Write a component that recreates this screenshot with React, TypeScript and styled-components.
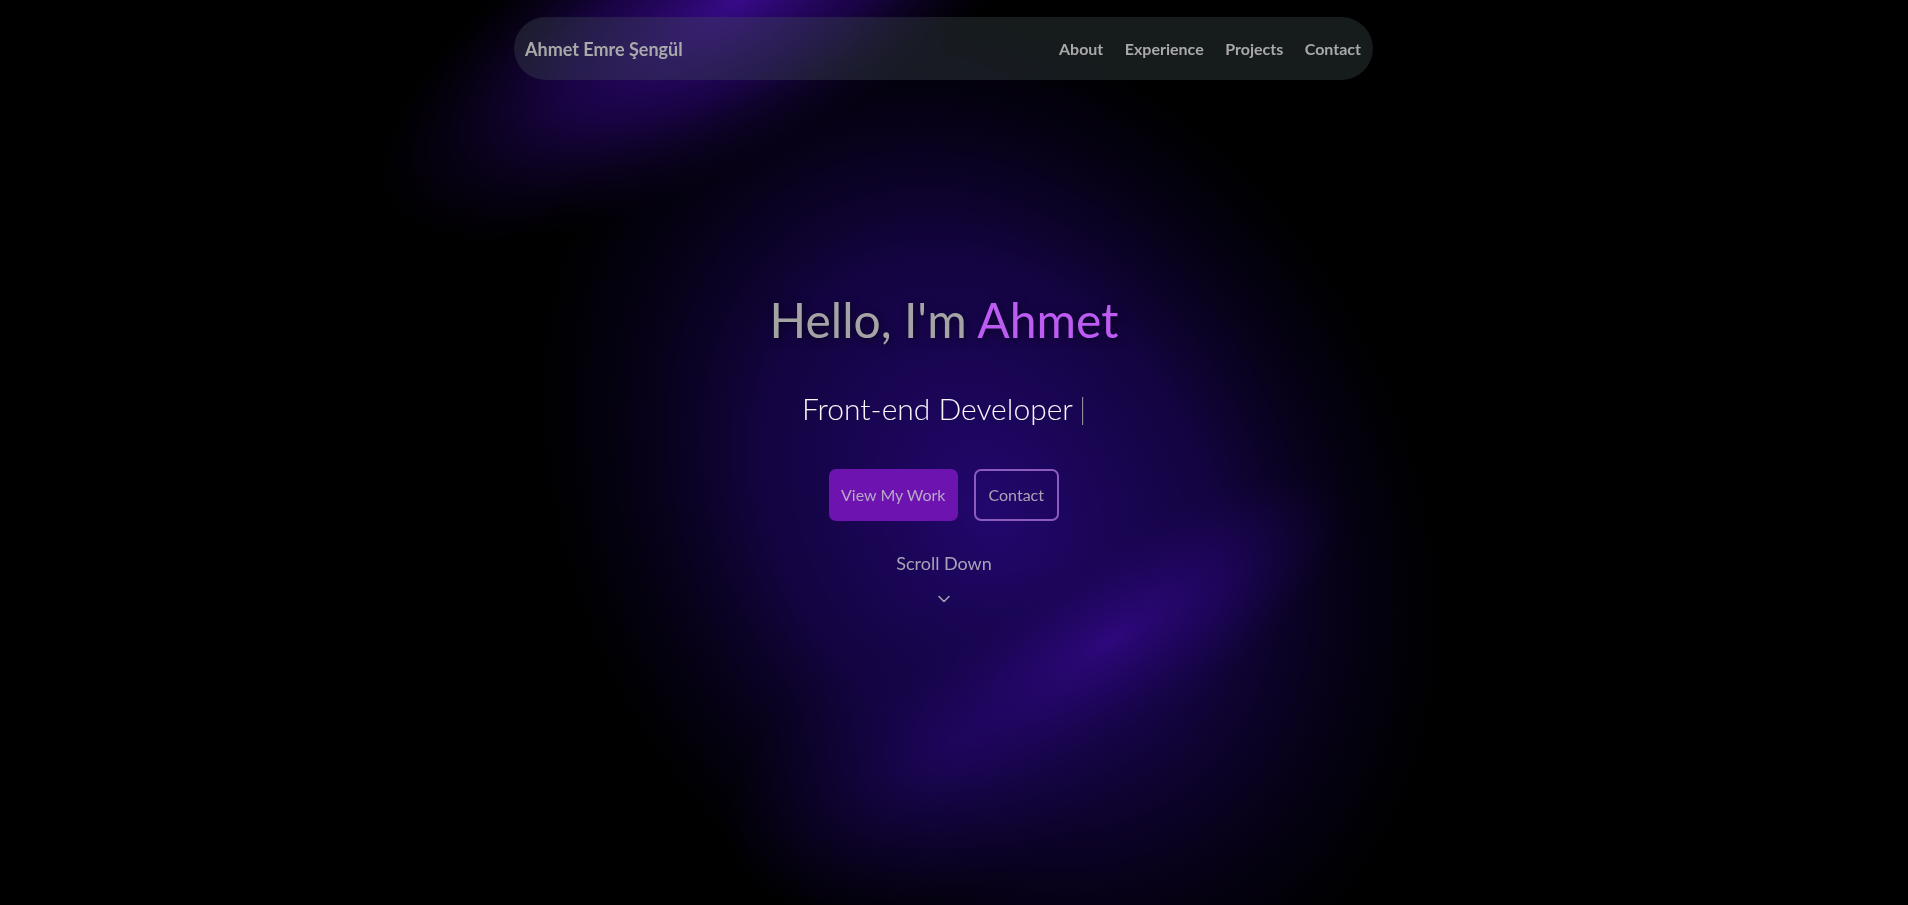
import React from "react";
import styled, { createGlobalStyle } from "styled-components";
import { ChevronDown } from "lucide-react";

const Global = createGlobalStyle`
  html, body {
    margin: 0;
    padding: 0;
    background: #000;
  }
  body {
    font-family: Lato, "Noto Sans", "Liberation Sans", sans-serif;
    overflow: hidden;
  }
  * { box-sizing: border-box; }
`;

const Page = styled.div`
  position: relative;
  width: calc(100% - 20px);
  min-height: 100vh;
  background: #000;
`;

const Glow = styled.svg`
  position: fixed;
  inset: 0;
  width: 100vw;
  height: 100vh;
  z-index: 0;
  pointer-events: none;
`;

const NavBar = styled.nav`
  position: fixed;
  top: 17px;
  left: 514px;
  z-index: 2;
  width: 859px;
  height: 63px;
  padding: 0 12px 0 11px;
  border-radius: 32px;
  display: flex;
  align-items: center;
  justify-content: space-between;
  background: rgba(72, 88, 92, 0.3);
  backdrop-filter: blur(10px);
`;

const Logo = styled.a`
  font-size: 18px;
  font-weight: 700;
  color: #a9a9a9;
  text-decoration: none;
`;

const Links = styled.div`
  display: flex;
  align-items: center;
  gap: 21.5px;
`;

const NavLink = styled.a`
  font-size: 16px;
  font-weight: 700;
  color: #a9a9a9;
  text-decoration: none;
`;

const Hero = styled.section`
  position: relative;
  z-index: 1;
  min-height: 100vh;
  padding-bottom: 5px;
  display: flex;
  flex-direction: column;
  align-items: center;
  justify-content: center;
`;

const Title = styled.h1`
  margin: 0;
  font-size: 48px;
  font-weight: 400;
  line-height: 1.2;
  color: #a4a4a4;
  text-shadow: 2px 2px 8px rgba(0, 0, 0, 0.55);
`;

const Accent = styled.span`
  color: #bd5cf2;
`;

const Subtitle = styled.p`
  margin: 41px 0 0;
  font-size: 30px;
  font-weight: 300;
  line-height: 1.2;
  color: #f7f7f7;
`;

const Cursor = styled.span`
  color: #8d8d9a;
  margin-left: 6px;
`;

const Buttons = styled.div`
  display: flex;
  gap: 16px;
  margin-top: 43px;
`;

const Button = styled.a<{ $primary?: boolean }>`
  display: inline-block;
  padding: ${(p) => (p.$primary ? "16px 12px" : "14px 13px")};
  font-size: 16px;
  line-height: 20px;
  border-radius: 7px;
  text-decoration: none;
  border: ${(p) => (p.$primary ? "none" : "2px solid #8b5bbd")};
  background: ${(p) => (p.$primary ? "#6c13b0" : "transparent")};
  color: ${(p) => (p.$primary ? "#b9a9c9" : "#aba3b6")};
`;

const Scroll = styled.div`
  margin-top: 32px;
  display: flex;
  flex-direction: column;
  align-items: center;
  gap: 15px;
  color: #aaa3b8;
`;

const ScrollText = styled.span`
  font-size: 18px;
  line-height: 1.2;
`;

function Background() {
  return (
    <Glow viewBox="0 0 1908 905" preserveAspectRatio="none">
      <defs>
        <radialGradient id="gTop">
          <stop offset="0" stopColor="#380a88" stopOpacity="1" />
          <stop offset="0.5" stopColor="#28066e" stopOpacity="0.6" />
          <stop offset="1" stopColor="#14043a" stopOpacity="0" />
        </radialGradient>
        <radialGradient id="gMid">
          <stop offset="0" stopColor="#22076e" stopOpacity="1" />
          <stop offset="0.5" stopColor="#1a0556" stopOpacity="0.75" />
          <stop offset="1" stopColor="#0c0330" stopOpacity="0" />
        </radialGradient>
        <radialGradient id="gStreak">
          <stop offset="0" stopColor="#2e087c" stopOpacity="1" />
          <stop offset="0.5" stopColor="#24066a" stopOpacity="0.55" />
          <stop offset="1" stopColor="#1a0550" stopOpacity="0" />
        </radialGradient>
        <radialGradient id="gLow">
          <stop offset="0" stopColor="#1e0660" stopOpacity="0.85" />
          <stop offset="1" stopColor="#12043c" stopOpacity="0" />
        </radialGradient>
      </defs>
      <ellipse cx="990" cy="510" rx="540" ry="420" fill="url(#gMid)" transform="rotate(58 990 510)" />
      <ellipse cx="960" cy="740" rx="260" ry="140" fill="url(#gLow)" transform="rotate(-30 960 740)" />
      <ellipse cx="740" cy="0" rx="410" ry="150" fill="url(#gTop)" transform="rotate(-30 740 0)" />
      <ellipse cx="1110" cy="640" rx="270" ry="95" fill="url(#gStreak)" transform="rotate(-32 1110 640)" />
    </Glow>
  );
}

export default function App() {
  return (
    <>
      <Global />
      <Page>
        <Background />
        <NavBar>
          <Logo href="#">Ahmet Emre Şengül</Logo>
          <Links>
            <NavLink href="#about">About</NavLink>
            <NavLink href="#experience">Experience</NavLink>
            <NavLink href="#projects">Projects</NavLink>
            <NavLink href="#contact">Contact</NavLink>
          </Links>
        </NavBar>
        <Hero>
          <Title>
            Hello, I'm <Accent>Ahmet</Accent>
          </Title>
          <Subtitle>
            Front-end Developer<Cursor>|</Cursor>
          </Subtitle>
          <Buttons>
            <Button $primary href="#projects">View My Work</Button>
            <Button href="#contact">Contact</Button>
          </Buttons>
          <Scroll>
            <ScrollText>Scroll Down</ScrollText>
            <ChevronDown size={20} strokeWidth={1.8} />
          </Scroll>
        </Hero>
      </Page>
    </>
  );
}
